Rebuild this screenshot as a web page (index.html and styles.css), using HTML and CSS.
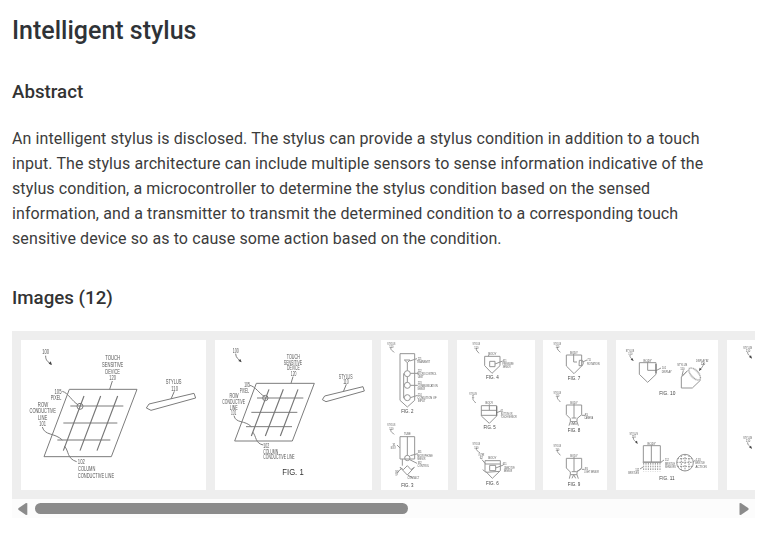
FILE: index.html
```html
<!DOCTYPE html>
<html lang="en">
<head>
  <meta charset="UTF-8">
  <title>Intelligent stylus</title>
  <link rel="stylesheet" href="styles.css">
</head>
<body>

<h1>Intelligent stylus</h1>

<section>
  <h2>Abstract</h2>
  <p class="abstract">An intelligent stylus is disclosed. The stylus can provide a stylus condition in addition to a touch input. The stylus architecture can include multiple sensors to sense information indicative of the stylus condition, a microcontroller to determine the stylus condition based on the sensed information, and a transmitter to transmit the determined condition to a corresponding touch sensitive device so as to cause some action based on the condition.</p>
</section>

<section>
  <h2 class="images-title">Images (12)</h2>
  <div class="carousel">
    <div class="strip">

      <!-- overview -->
      <svg class="sheet overview" viewBox="63 45 555 450" width="185" height="150">
        <path d="M208 193H411L334 395H132Z"/>
        <path d="M211 243H370M190 294H352"/>
        <path class="bold" d="M172 345H331"/>
        <path class="bold" d="M252 213L190 377M302 213L240 377M353 213L291 377"/>
        <circle cx="240" cy="244" r="9"/>
        <path d="M137 92C136 106 145 111 153 118M337 168L329 193M187 199C205 204 215 228 235 240M127 306C135 333 162 322 187 345M193 363C207 377 200 401 230 410"/>
        <path class="tip" d="M156 120L146 116L152 109Z"/>
        <path d="M439 249L447 237L582 205L587 219L453 256ZM523 199L513 222"/>
        <text x="137" y="86" textLength="21">100</text>
        <text x="338" y="106" textLength="45">TOUCH</text>
        <text x="338" y="126" textLength="64">SENSITIVE</text>
        <text x="338" y="146" textLength="44">DEVICE</text>
        <text x="338" y="166" textLength="20">120</text>
        <text x="174" y="206" textLength="21">105</text>
        <text x="168" y="226" textLength="32">PIXEL</text>
        <text x="129" y="245" textLength="31">ROW</text>
        <text x="128" y="265" textLength="79">CONDUCTIVE</text>
        <text x="128" y="285" textLength="28">LINE</text>
        <text x="128" y="304" textLength="20">101</text>
        <text x="521" y="177" textLength="47">STYLUS</text>
        <text x="524" y="197" textLength="20">110</text>
        <text x="244" y="418" textLength="21">102</text>
        <text x="260" y="438" textLength="52">COLUMN</text>
        <text x="288" y="458" textLength="109">CONDUCTIVE LINE</text>
      </svg>

      <!-- fig. 1 -->
      <svg class="sheet fig1" viewBox="30 45 471 450" width="157" height="150">
        <path d="M154 175H328L262 348H89Z"/>
        <path d="M156 219H295M139 262H277M123 305H261"/>
        <path class="bold" d="M192 193L139 333M235 193L181 333M279 193L226 333"/>
        <circle cx="181" cy="219" r="8"/>
        <path d="M92 86C92 98 101 103 107 109M264 155L258 175M134 181C151 184 162 205 179 215M87 272C92 296 120 285 139 305M143 321C155 335 150 355 175 360"/>
        <path class="tip" d="M110 112L100 108L106 102Z"/>
        <path d="M352 224L359 213L474 185L478 198L363 230ZM424 178L415 200"/>
        <text x="92" y="84" textLength="18">100</text>
        <text x="265" y="102" textLength="39">TOUCH</text>
        <text x="264" y="119" textLength="55">SENSITIVE</text>
        <text x="265" y="136" textLength="38">DEVICE</text>
        <text x="266" y="153" textLength="17">120</text>
        <text x="126" y="187" textLength="17">105</text>
        <text x="118" y="203" textLength="28">PIXEL</text>
        <text x="87" y="220" textLength="27">ROW</text>
        <text x="86" y="237" textLength="68">CONDUCTIVE</text>
        <text x="86" y="254" textLength="24">LINE</text>
        <text x="86" y="271" textLength="16">101</text>
        <text x="422" y="162" textLength="41">STYLUS</text>
        <text x="423" y="178" textLength="17">110</text>
        <text x="184" y="369" textLength="18">102</text>
        <text x="197" y="386" textLength="45">COLUMN</text>
        <text x="222" y="403" textLength="94">CONDUCTIVE LINE</text>
        <text class="caption" x="264" y="451" textLength="64">FIG. 1</text>
      </svg>

      <!-- figs. 2-3 -->
      <svg class="sheet small" viewBox="18 45 201 450" width="67" height="150">
        <path d="M75 86H119V226L97 246L75 226ZM88 105H105L97 113ZM97 113V137M97 155V172M86 145V220M106 145H128M106 181H128M106 218L128 211M104 108L126 101"/>
        <circle cx="97" cy="146" r="9"/>
        <circle cx="97" cy="181" r="9"/>
        <circle cx="97" cy="218" r="9"/>
        <path d="M48 66C45 76 54 78 58 82M48 312C45 322 54 324 58 328"/>
        <text x="49" y="59" textLength="24">STYLUS</text>
        <text x="49" y="69" textLength="12">110</text>
        <text x="134" y="104" textLength="12">221</text>
        <text x="145" y="113" textLength="40">TRANSMIT</text>
        <text x="134" y="140" textLength="12">222</text>
        <text x="156" y="150" textLength="58">MICROCONTROL</text>
        <text x="137" y="160" textLength="18">UNIT</text>
        <text x="134" y="176" textLength="12">223</text>
        <text x="158" y="186" textLength="60">COMMUNICATION</text>
        <text x="139" y="195" textLength="23">SENSOR</text>
        <text x="134" y="212" textLength="12">224</text>
        <text x="156" y="222" textLength="58">CONDITION OF</text>
        <text x="140" y="231" textLength="24">INPUT</text>
        <text class="caption" x="97" y="264" textLength="37">FIG. 2</text>
        <path d="M75 335H119V402H75ZM97 335V392M106 392L128 386M102 403L126 415M82 402V422M75 427L97 450L118 427L108 434L97 422L85 434ZM66 360L75 369M67 442L80 430M98 450L112 458"/>
        <circle cx="97" cy="399" r="8"/>
        <text x="49" y="304" textLength="24">STYLUS</text>
        <text x="49" y="314" textLength="12">110</text>
        <text x="97" y="329" textLength="20">TUBE</text>
        <text x="57" y="363" textLength="9">31</text>
        <text x="55" y="373" textLength="16">BODY</text>
        <text x="134" y="385" textLength="12">331</text>
        <text x="150" y="395" textLength="46">MICROPHONE</text>
        <text x="139" y="404" textLength="25">SENSOR</text>
        <text x="134" y="418" textLength="12">332</text>
        <text x="145" y="427" textLength="35">CONTROL</text>
        <text x="65" y="445" textLength="10">30</text>
        <text x="65" y="454" textLength="8">TIP</text>
        <text x="115" y="462" textLength="35">CONTACT</text>
        <text class="caption" x="97" y="485" textLength="37">FIG. 3</text>
      </svg>

      <!-- figs. 4-6 -->
      <svg class="sheet small" viewBox="21 45 234 450" width="78" height="150">
        <path d="M104 94H150V122L126 145L104 122ZM135 117L158 108M119 109H135V125H119ZM116 90V94"/>
        <path d="M79 69C77 78 84 79 87 85M69 218C67 227 74 228 77 234M79 368C77 377 84 378 90 384"/>
        <text x="79" y="61" textLength="23">STYLUS</text>
        <text x="79" y="71" textLength="12">110</text>
        <text x="127" y="90" textLength="25">BODY</text>
        <text x="164" y="110" textLength="12">411</text>
        <text x="174" y="120" textLength="34">PRESSURE</text>
        <text x="170" y="130" textLength="23">SENSOR</text>
        <text class="caption" x="127" y="163" textLength="38">FIG. 4</text>
        <path d="M94 242H140V273L118 295L94 273ZM94 256H140M94 271H140M118 238V256M140 263L153 258"/>
        <path class="bold" d="M140 244V272"/>
        <text x="69" y="211" textLength="23">STYLUS</text>
        <text x="69" y="220" textLength="8">11</text>
        <text x="118" y="238" textLength="23">BODY</text>
        <text x="156" y="261" textLength="8">51</text>
        <text x="170" y="270" textLength="34">BUTTON OR</text>
        <text x="176" y="279" textLength="48">TOUCH SENSOR</text>
        <text class="caption" x="119" y="312" textLength="37">FIG. 5</text>
        <path d="M105 407H151V437L127 460L105 437ZM105 417H151M119 421H137V437H119ZM137 429L160 420M98 434L108 442L150 439M96 404L106 416"/>
        <text x="79" y="361" textLength="23">STYLUS</text>
        <text x="79" y="371" textLength="12">110</text>
        <text x="94" y="394" textLength="18">OUTER</text>
        <text x="94" y="403" textLength="10">62</text>
        <text x="127" y="403" textLength="25">BODY</text>
        <text x="164" y="421" textLength="12">611</text>
        <text x="178" y="431" textLength="32">CAPACITIVE</text>
        <text x="174" y="440" textLength="26">SENSOR</text>
        <text class="caption" x="127" y="479" textLength="38">FIG. 6</text>
      </svg>

      <!-- figs. 7-9 -->
      <svg class="sheet small tight" viewBox="24 45 192 450" width="64" height="150">
        <path d="M94 90H140V123L117 146L94 123ZM116 87V111H126M133 106H142L145 114L142 122H132ZM143 111L156 105"/>
        <path d="M67 66C65 75 72 76 76 82M67 214C65 223 72 224 76 231M67 374C65 383 72 384 76 391"/>
        <text x="67" y="59" textLength="23">STYLUS</text>
        <text x="67" y="69" textLength="11">110</text>
        <text x="117" y="87" textLength="24">BODY</text>
        <text x="162" y="109" textLength="11">711</text>
        <text x="175" y="119" textLength="38">ROTATION</text>
        <text class="caption" x="117" y="164" textLength="38">FIG. 7</text>
        <path d="M94 240H140V269L126 281V290H106V281L94 269ZM117 236V279M110 279H124M106 290L102 302M110 288L116 298L121 288M126 290L130 302M140 271H150M107 297H126"/>
        <text x="67" y="208" textLength="23">STYLUS</text>
        <text x="67" y="217" textLength="11">110</text>
        <text x="117" y="236" textLength="22">BODY</text>
        <text x="154" y="274" textLength="10">81</text>
        <text x="161" y="283" textLength="26">CAMERA</text>
        <text class="caption" x="117" y="322" textLength="38">FIG. 8</text>
        <path d="M94 400H140V429L126 441V449H106V441L94 429ZM117 396V440M110 440H124L140 431M106 449L103 461M111 460L116 449L122 460M126 449L130 461M141 433H149"/>
        <text x="67" y="367" textLength="23">STYLUS</text>
        <text x="67" y="377" textLength="11">110</text>
        <text x="117" y="396" textLength="22">BODY</text>
        <text x="154" y="434" textLength="10">91</text>
        <text x="170" y="443" textLength="44">LIGHT SENSOR</text>
        <text class="caption" x="117" y="482" textLength="38">FIG. 9</text>
      </svg>

      <!-- figs. 10-11 -->
      <svg class="sheet small" viewBox="18 45 306 450" width="102" height="150">
        <path d="M88 113H138V148L113 172L88 148ZM113 110V136H138M138 137L153 129"/>
        <path class="bold" d="M138 117V145"/>
        <path d="M60 90C59 98 64 99 69 106M70 338C69 346 76 347 81 355M281 114C280 125 275 127 269 136"/>
        <path d="M214 189V156L234 136M272 165L247 189H214M216 154L230 139"/>
        <ellipse cx="254" cy="147" rx="11" ry="23" transform="rotate(-43 254 147)"/>
        <path class="tip" d="M71 108L62 104L67 99ZM267 138L269 128L275 133ZM83 357L75 351L81 347Z"/>
        <text x="60" y="81" textLength="25">STYLUS</text>
        <text x="61" y="91" textLength="12">110</text>
        <text x="113" y="111" textLength="25">BODY</text>
        <text x="162" y="133" textLength="12">101</text>
        <text x="170" y="143" textLength="30">DISPLAY</text>
        <text x="217" y="124" textLength="30">STYLUS</text>
        <text x="217" y="134" textLength="13">110</text>
        <path d="M220 136L216 152"/>
        <text x="277" y="110" textLength="38">DISPLAY AT</text>
        <text x="279" y="119" textLength="13">120</text>
        <text class="caption" x="172" y="210" textLength="48">FIG. 10</text>
        <path d="M100 362H151V411H100ZM124 359V411M98 412H154M151 413L162 405M90 432L99 426"/>
        <path class="dash" d="M101 414V439M108 414V439M115 414V439M122 414V439M129 414V439M136 414V439M143 414V439M150 414V439"/>
        <circle cx="225" cy="413" r="25"/>
        <path class="dash" d="M202 401H248M200 412H250M202 424H248M214 391V435M225 388V438M237 391V435"/>
        <path d="M249 411L257 405"/>
        <text x="71" y="329" textLength="25">STYLUS</text>
        <text x="71" y="339" textLength="12">110</text>
        <text x="125" y="360" textLength="25">BODY</text>
        <text x="171" y="409" textLength="12">112</text>
        <text x="180" y="419" textLength="30">BRISTLE</text>
        <text x="181" y="429" textLength="32">SENSORS</text>
        <text x="82" y="437" textLength="12">111</text>
        <text x="71" y="446" textLength="32">BRISTLES</text>
        <text x="265" y="407" textLength="14">113</text>
        <text x="270" y="418" textLength="28">BRISTLE</text>
        <text x="273" y="429" textLength="33">ACTION</text>
        <text class="caption" x="171" y="466" textLength="46">FIG. 11</text>
      </svg>

      <!-- next sheet, cut off by the strip -->
      <svg class="sheet small" viewBox="351 45 306 450" width="102" height="150">
        <path d="M413 81C412 89 418 91 424 98M413 352C412 360 418 362 424 369"/>
        <path class="tip" d="M426 101L417 96L423 91ZM426 372L417 367L423 362Z"/>
        <text x="413" y="71" textLength="27">STYLUS</text>
        <text x="414" y="81" textLength="13">110</text>
        <text x="413" y="342" textLength="27">STYLUS</text>
        <text x="414" y="352" textLength="13">110</text>
      </svg>

    </div>
    <div class="scrollbar">
      <svg class="arrow" viewBox="0 0 10 12" width="10" height="12"><path d="M9.3 0.3V11.7L8 12L0.3 6.7V5.3L8 0Z"/></svg>
      <div class="track"><div class="thumb"></div></div>
      <svg class="arrow" viewBox="0 0 10 12" width="10" height="12"><path d="M0.5 0.3V11.7L1.8 12L9.5 6.7V5.3L1.8 0Z"/></svg>
    </div>
  </div>
</section>

<script>
  // condense the drawing labels instead of overlapping their letters
  document.querySelectorAll('.sheet text').forEach(label => {
    label.setAttribute('lengthAdjust', 'spacingAndGlyphs');
  });
</script>

</body>
</html>
```
FILE: styles.css
```css
body {
  margin: 0;
  padding: 13px 12px;
  background: #fff;
  color: #333;
  font-family: Roboto, "Liberation Sans", sans-serif;
  overflow: hidden;
}
h1 {
  margin: 0;
  font-size: 25px;
  line-height: 36px;
  font-weight: 500;
  color: #2f3337;
}
h2 {
  margin: 31px 0 0;
  font-size: 18.72px;
  line-height: 24px;
  font-weight: 500;
}
.abstract {
  width: 700px;
  margin: 22px 0 0;
  font-size: 16px;
  line-height: 25px;
  letter-spacing: 0.11px;
  color: #3c3c3c;
}
.images-title {
  margin-top: 35px;
}
.carousel {
  width: 743px;
  margin-top: 21px;
}
.strip {
  display: flex;
  gap: 9px;
  padding: 9px;
  height: 150px;
  background: #eee;
  overflow: hidden;
}
.sheet {
  flex: none;
  background: #fff;
  fill: none;
  stroke: #7c7c7c;
  stroke-width: 3;
}
.sheet > * {
  filter: blur(1px);
}
.sheet .bold {
  stroke: #777;
  stroke-width: 3.5;
}
.sheet .tip {
  fill: #444;
  stroke: none;
}
.sheet .dash {
  stroke-dasharray: 5 3;
}
.sheet text {
  fill: #555;
  stroke: none;
  font-family: "Liberation Sans", sans-serif;
  font-size: 21px;
  text-anchor: middle;
}
.sheet .caption {
  fill: #333;
  font-size: 25px;
}
.sheet.fig1 text:not(.caption) {
  font-size: 19px;
}
.sheet.small {
  stroke: #959595;
}
.small .bold {
  stroke: #777;
}
.sheet.small text {
  fill: #555;
  font-size: 11px;
}
.sheet.small .caption {
  fill: #444;
  font-size: 18px;
}
.tight {
  margin-left: -1px;
}
.scrollbar {
  display: flex;
  align-items: center;
  gap: 7px;
  height: 19px;
  padding: 0 6px;
  background: #fcfcfc;
}
.arrow {
  flex: none;
  fill: #8b8b8b;
}
.track {
  flex: 1;
}
.thumb {
  width: 373px;
  height: 11px;
  border-radius: 6px;
  background: #8b8b8b;
}
```
